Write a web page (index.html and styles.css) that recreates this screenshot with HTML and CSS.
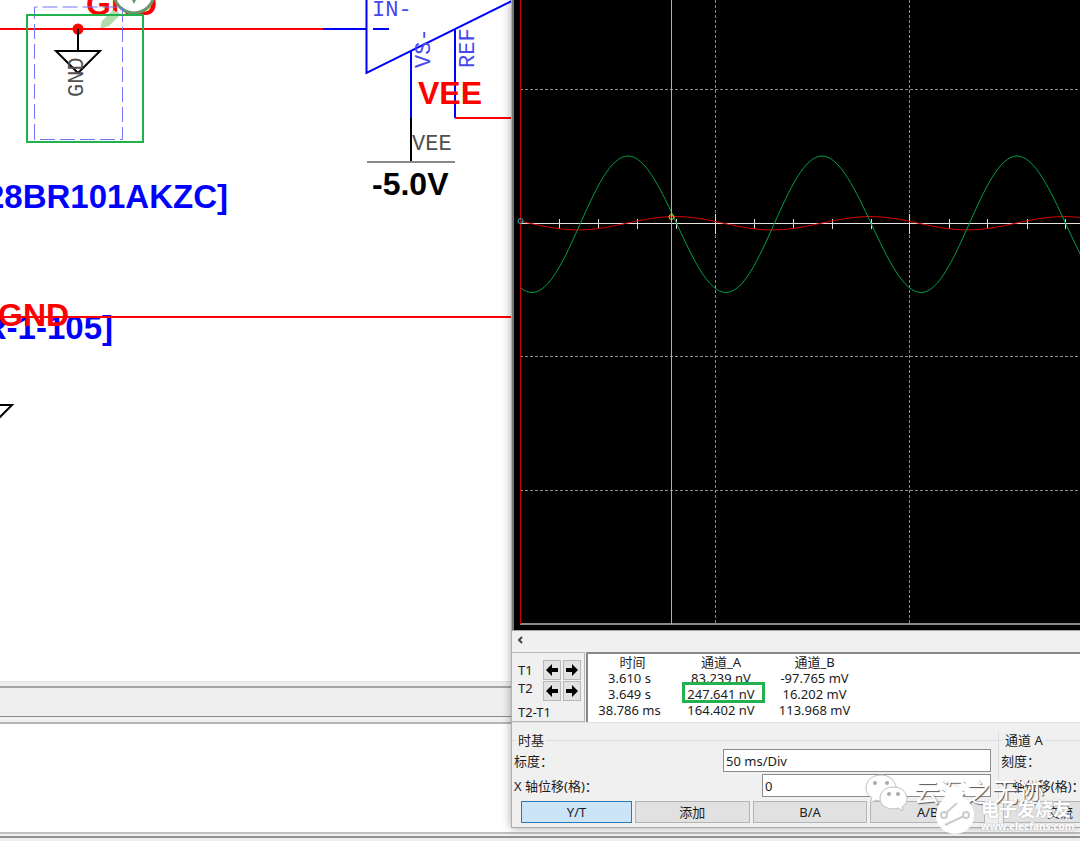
FILE: index.html
```html
<!DOCTYPE html>
<html lang="zh-CN">
<head>
<meta charset="utf-8">
<title>示波器</title>
<link rel="stylesheet" href="styles.css">
</head>
<body>
<div class="desktop">
  <main class="schematic">
    <svg class="drawing" role="img" aria-label="电路图">
      <text class="net" x="86" y="15">GND</text>
      <path class="probe-tip" d="M100 29L102 21L113 10L121 14L109 26Z"/>
      <circle class="probe" cx="134" cy="-7" r="20"/>
      <path class="probe-mark" d="M129 -6L134 4L139 -6Z"/>
      <path class="wire" d="M0 29H323"/>
      <path class="part" d="M323 29H366"/>
      <path class="dashed" d="M34.500 139V7H122.500V139.500H34"/>
      <rect class="marker" x="27" y="15" width="116" height="127"/>
      <circle class="node" cx="78" cy="29" r="5.500"/>
      <path class="symbol" d="M78 29V51M56 51H100L78 73Z"/>
      <text class="pin dark" transform="translate(83 97) rotate(-90)">GND</text>
      <path class="part" d="M366.500 0V73L512 1M373 29H389M411 51V118M455 29V118"/>
      <text class="pin" x="372" y="16">IN-</text>
      <text class="pin" transform="translate(430 68) rotate(-90)">VS-</text>
      <text class="pin" transform="translate(474 68) rotate(-90)">REF</text>
      <path class="wire" d="M455 118H512"/>
      <path class="symbol" d="M411 118V162"/>
      <path class="rail" d="M367 162H455"/>
      <text class="net" x="418" y="104">VEE</text>
      <text class="pin dark" x="412" y="150">VEE</text>
      <text class="value" x="372" y="195">-5.0V</text>
      <text class="label" x="228" y="208">[28BR101AKZC]</text>
      <text class="label" x="113" y="339">[R-1-105]</text>
      <text class="net" x="-2" y="326">GND</text>
      <path class="wire" d="M0 317H512"/>
      <path class="symbol thin" d="M-10 405H12L-10 427"/>
    </svg>
  </main>
  <div class="splitter"></div>
  <div class="toolstrip"></div>
  <div class="gap"></div>
  <div class="sheet"></div>
  <footer class="status"></footer>
</div>

<section class="scope">
  <svg class="plot" role="img" aria-label="波形">
    <defs><clipPath id="area"><rect x="8" y="0" width="2000" height="630"/></clipPath></defs>
    <path class="grid" d="M8 89.500H2000M8 356.500H2000M8 490.500H2000M203.500 0V623M397.500 0V623"/>
    <path class="axis-end" d="M8 624H2000"/>
    <path class="axis" d="M8 223.500H2000"/>
    <path class="ticks" d="M47.500 219V229M86.500 219V229M125.500 219V229M164.500 219V229M203.500 214V234M242.500 219V229M281.500 219V229M320.500 219V229M359.500 219V229M397.500 214V234M437.500 219V229M475.500 219V229M515.500 219V229M553.500 219V229"/>
    <g clip-path="url(#area)">
      <path class="wave-b" d="M-31 216.500C4 216.500 31 230 66 230S128 216.500 163 216.500S225 230 260 230S323 216.500 358 216.500S420 230 455 230S517 216.500 552 216.500S614 230 649 230"/>
      <path class="wave-a" d="M-78 156C-43 156 -15 292.500 20 292.500S81 156 116 156S179 292.500 214 292.500S275 156 310 156S374 292.500 409 292.500S470 156 505 156S568 292.500 603 292.500"/>
    </g>
    <path class="cursor-one" d="M8.500 0V624"/>
    <path class="cursor-two" d="M159.500 0V624"/>
    <circle class="handle-one" cx="8.500" cy="221" r="2.500"/>
    <circle class="handle-two" cx="159.500" cy="217" r="2.500"/>
  </svg>
  <div class="scrollbar"><button class="scroll" aria-label="向左滚动"><svg width="6" height="8"><path d="M5 1L2 4L5 7"/></svg></button></div>
  <div class="readout">
    <div class="cursors">
      <span>T1</span>
      <button class="arrow" aria-label="T1 向左"><svg width="12" height="12"><path d="M0 6L6 0V4H12V8H6V12Z"/></svg></button>
      <button class="arrow" aria-label="T1 向右"><svg width="12" height="12"><path d="M12 6L6 0V4H0V8H6V12Z"/></svg></button>
      <span class="second">T2</span>
      <button class="arrow" aria-label="T2 向左"><svg width="12" height="12"><path d="M0 6L6 0V4H12V8H6V12Z"/></svg></button>
      <button class="arrow" aria-label="T2 向右"><svg width="12" height="12"><path d="M12 6L6 0V4H0V8H6V12Z"/></svg></button>
      <span class="delta">T2-T1</span>
    </div>
    <div class="values">
      <table>
        <thead><tr><th>时间</th><th>通道_A</th><th>通道_B</th></tr></thead>
        <tbody>
          <tr><td>3.610 s</td><td>83.239 nV</td><td>-97.765 mV</td></tr>
          <tr><td>3.649 s</td><td class="picked">247.641 nV</td><td>16.202 mV</td></tr>
          <tr><td>38.786 ms</td><td>164.402 nV</td><td>113.968 mV</td></tr>
        </tbody>
      </table>
    </div>
  </div>
  <div class="groups">
    <section class="group timebase">
      <h2>时基</h2>
      <div class="field"><label for="scale">标度：</label><input id="scale" class="wide" value="50 ms/Div"></div>
      <div class="field"><label for="xpos">X 轴位移(格)：</label><input id="xpos" class="narrow" value="0"></div>
      <div class="modes">
        <button class="mode active">Y/T</button><button class="mode">添加</button><button class="mode">B/A</button><button class="mode">A/B</button>
      </div>
    </section>
    <section class="group channel">
      <h2>通道 A</h2>
      <div class="field"><span>刻度：</span></div>
      <div class="field"><span>Y 轴位移(格)：</span></div>
      <div class="modes"><button class="mode">交流</button></div>
    </section>
  </div>
</section>

<div class="author-mark">
  <svg width="44" height="38" aria-hidden="true">
    <path class="bubble" d="M17 2C8 2 2 8 2 15C2 20 5 23 8 25L6 30L12 27C14 28 17 28 20 28C29 27 33 21 32 14C31 7 25 2 17 2Z"/>
    <path class="bubble" d="M29 14C21 14 16 19 16 25C16 32 22 36 30 36L34 35L39 38L38 34C42 31 43 28 43 25C42 18 37 14 29 14Z"/>
    <circle class="eye" cx="11" cy="10" r="2"/><circle class="eye" cx="23" cy="10" r="2"/><circle class="eye" cx="25" cy="21" r="2"/><circle class="eye" cx="34" cy="21" r="2"/>
  </svg>
  <span>云深之无迹</span>
</div>
<div class="site-mark">
  <svg width="40" height="56" aria-hidden="true">
    <circle class="disc" cx="20" cy="36" r="19"/><circle class="disc" cx="19" cy="16" r="9"/><circle class="disc" cx="28" cy="8" r="4"/>
    <path class="trace" d="M10 35L22 24M10 46L29 37"/>
    <circle class="pad" cx="9" cy="36" r="3"/><circle class="pad" cx="31" cy="36" r="3"/>
  </svg>
  <div class="site-text"><strong>电子发烧友</strong><span>www.elecfans.com</span></div>
</div>
</body>
</html>
```
FILE: styles.css
```css
* { box-sizing: border-box; }
body {
  margin: 0;
  position: relative;
  overflow: hidden;
  height: 100vh;
  font: 13px/16px "Noto Sans", "Noto Sans CJK SC", sans-serif;
  color: #1c1c1c;
}
button, input { font: inherit; color: inherit; margin: 0; border-radius: 0; }

.desktop { display: flex; flex-direction: column; height: 100%; background: #fff; }
.schematic { flex: 1; min-height: 0; }
.drawing { display: block; width: 100%; height: 100%; }
.splitter { height: 5px; background: #efefef; border-top: 1px solid #e0e0e0; }
.toolstrip { height: 31px; background: #efefef; border-top: 2px solid #a4a4a4; border-bottom: 1px solid #8a8a8a; }
.gap { height: 7px; background: #f0f0f0; border-bottom: 2px solid #b4b4b8; }
.sheet { height: 108px; background: #fff; }
.status { height: 9px; background: linear-gradient(#c0c0c4 0 2px, #f2f2f2 2px 4px, #929292 4px 6px, #efefef 6px); }

.net, .value, .label { font-family: "Liberation Sans", sans-serif; font-weight: bold; font-size: 32px; }
.net { fill: #f00; }
.value { fill: #000; }
.label { fill: #00f; font-size: 33px; text-anchor: end; }
.pin { font-family: "Liberation Mono", monospace; font-size: 22px; fill: #4848ec; }
.pin.dark { fill: #505050; }
.wire, .part, .symbol, .dashed, .marker, .rail { fill: none; stroke-width: 2; }
.wire { stroke: #f00; }
.part { stroke: #00f; }
.symbol { stroke: #000; }
.rail { stroke: #888; }
.dashed { stroke: #7474f8; stroke-width: 1; stroke-dasharray: 15 5; }
.marker { stroke: #22b14c; }
.node { fill: #f00; }
.probe { fill: #fff; stroke: #6a956a; stroke-width: 3; }
.probe-tip { fill: #b2dcae; }
.probe-mark { fill: #6a956a; }

.scope {
  position: absolute;
  top: 0;
  left: 511px;
  right: 0;
  overflow: hidden;
  background: #f0f0f0;
  border-left: 1px solid #b0b0b0;
  border-bottom: 1px solid #aaa;
  box-shadow: 0 0 9px rgba(0, 0, 0, .35);
}
.plot { display: block; width: 100%; height: 630px; background: #000; border-left: 2px solid #777; overflow: hidden; }
.plot > * { transform: translateX(-2px); }
.plot path, .plot circle { fill: none; stroke-width: 1; }
.grid { stroke: #8c8c8c; stroke-dasharray: 3 2; }
.axis { stroke: #e4e4e4; }
.axis-end { stroke: #888; }
.ticks { stroke: #ddd; }
.plot .axis-end { stroke-width: 2; }
.wave-a { stroke: #00a044; }
.wave-b { stroke: #d80000; }
.cursor-one { stroke: #d00000; }
.cursor-two { stroke: #c4c400; }
.handle-one { stroke: #20c0c8; }
.handle-two { stroke: #e8d800; }

.scrollbar { height: 22px; padding: 3px 5px; border-top: 1px solid #a8a8a8; }
.scroll { display: flex; align-items: center; width: 8px; height: 12px; padding: 0; border: 0; background: none; }
.scroll path { fill: none; stroke: #444; stroke-width: 2; }

.readout { display: flex; height: 71px; border-bottom: 1px solid #ddd; }
.cursors {
  width: 73px;
  padding: 7px 3px 0 6px;
  border: 1px solid #b8b8b8;
  border-left: 0;
  display: grid;
  grid-template-columns: 23px 18px 18px;
  grid-template-rows: 20px 20px 20px;
  column-gap: 2px;
  row-gap: 1px;
}
.cursors span { line-height: 20px; }
.cursors .second { line-height: 14px; }
.cursors .delta { grid-column: 1 / -1; }
.arrow { display: flex; align-items: center; justify-content: center; padding: 0; border: 1px solid #b8b8b8; background: #e2e2e2; }
.values { flex: 1; margin-left: 1px; background: #fff; border-top: 2px solid #888; border-left: 2px solid #888; }
table { table-layout: fixed; width: 276px; border-collapse: collapse; text-align: center; white-space: nowrap; }
th, td { padding: 0; height: 16px; line-height: 16px; font-weight: normal; }
td:first-child { padding-right: 6px; }
th:first-child { width: 89px; }
th:nth-child(2) { width: 88px; }
.picked { position: relative; }
.picked::after { content: ""; position: absolute; inset: -4px 0 -1px 5px; border: 3px solid #22b14c; }

.groups { display: flex; padding-top: 9px; }
.group { position: relative; flex: none; height: 95px; }
.group::before { content: ""; position: absolute; top: 8px; left: 0; right: 0; border-top: 1px solid #dcdcdc; }
.timebase { width: 486px; }
.channel { width: 300px; border-left: 1px solid #dcdcdc; }
h2 { position: relative; display: table; margin: 0 0 0 4px; padding: 0 2px; font-size: 13px; line-height: 16px; font-weight: normal; background: #f0f0f0; }
.field { display: flex; align-items: center; justify-content: space-between; height: 25px; padding: 0 7px 0 2px; white-space: nowrap; }
.field input { height: 23px; padding: 0 2px; border: 1px solid #8c8c8c; background: #fff; }
.wide { width: 268px; }
.narrow { width: 229px; }
.modes { display: flex; gap: 3px; padding: 3px 13px 0 9px; }
.mode { flex: 1; height: 22px; padding: 0; border: 1px solid #b4b4b4; background: #e1e1e1; line-height: 16px; }
.mode.active { flex: none; width: 111px; background: #cce4f7; border-color: #2a78b4; }
.channel .modes { padding: 3px 0 0 4px; }
.channel .mode { flex: none; width: 114px; }

.author-mark { position: absolute; left: 864px; top: 773px; display: flex; align-items: center; gap: 6px; white-space: nowrap; }
.author-mark span { color: #fff; font-size: 26px; line-height: 38px; text-shadow: 1px 1px 1px #555; }
.bubble { fill: #fff; stroke: #c0c0c0; stroke-width: 1; }
.eye { fill: #aaa; }
.site-mark { position: absolute; left: 935px; top: 779px; display: flex; align-items: flex-end; gap: 6px; }
.site-text { display: flex; flex-direction: column; padding-bottom: 2px; color: #fff; white-space: nowrap; text-shadow: 0 0 2px #aaa; }
.site-text strong { font-size: 18px; line-height: 20px; }
.site-text span { font-size: 10px; line-height: 14px; font-weight: bold; }
.disc { fill: #fff; }
.trace, .pad { fill: none; stroke: #ccc; stroke-width: 2; }
.pad { fill: #fff; }
```
